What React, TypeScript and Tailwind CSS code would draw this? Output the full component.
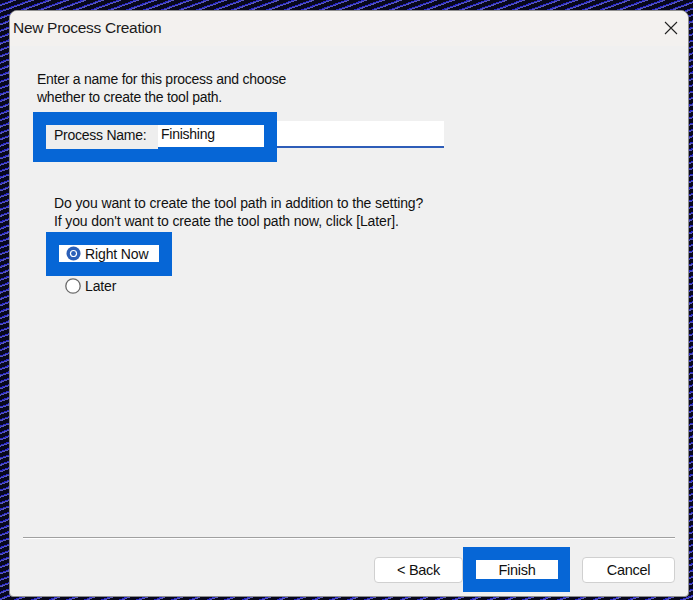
const RadioOn = () => (
  <svg width="15" height="15" viewBox="0 0 15 15" className="shrink-0">
    <circle cx="7.5" cy="7.5" r="7" fill="#2b5fb8" />
    <circle cx="7.5" cy="7.5" r="3.6" fill="#ffffff" />
    <circle cx="7.5" cy="7.5" r="2.4" fill="#2b5fb8" />
  </svg>
);

const RadioOff = () => (
  <svg width="16" height="16" viewBox="0 0 16 16" className="shrink-0">
    <circle cx="8" cy="8" r="7.2" fill="#ffffff" stroke="#6a6a6a" strokeWidth="1.3" />
  </svg>
);

export default function App() {
  return (
    <div
      className="w-[693px] h-[600px] overflow-hidden pt-[10px] pl-[9px] bg-[#08081c] bg-[repeating-linear-gradient(160deg,#08081c_0px,#08081c_4px,#2626c8_4px,#2626c8_5px,#5a5ab8_5px,#5a5ab8_6px)]"
      style={{ fontFamily: '"Liberation Sans", Arial, sans-serif' }}
    >
      <div className="w-[680px] h-[587px] flex flex-col rounded-t-[8px] rounded-b-[4px] border border-[#8e8e8e] bg-[#f0f0f0] overflow-hidden text-[#111]">
        {/* title bar */}
        <div className="h-[35px] shrink-0 flex items-center justify-between bg-[#f3f1ef] pl-[3px] pr-[10px] pb-[2px]">
          <span className="text-[15.5px] tracking-[-0.3px] text-[#1b1b1b]">New Process Creation</span>
          <svg width="14" height="14" viewBox="0 0 14 14">
            <path d="M1 1 L13 13 M13 1 L1 13" stroke="#222" strokeWidth="1.1" />
          </svg>
        </div>

        {/* body */}
        <div className="flex-1 flex flex-col text-[14px] leading-[18px] tracking-[-0.12px]">
          <p className="mt-[24px] ml-[27px] tracking-[-0.25px]">
            Enter a name for this process and choose
            <br />
            whether to create the tool path.
          </p>

          <div className="flex items-start mt-[6px] ml-[23px] tracking-[-0.25px]">
            <div className="w-[244px] h-[50px] bg-[#0666d6] pt-[13px] pl-[13px] flex">
              <div className="w-[112px] h-[24px] bg-[#eeeeee] pl-[8px] pt-[1px]">Process Name:</div>
              <div className="w-[106px] h-[22px] bg-white pl-[3px]">Finishing</div>
            </div>
            <div className="mt-[9px] w-[167px] h-[27px] bg-white border-b-2 border-[#2e5db8]" />
          </div>

          <p className="mt-[32px] ml-[44px]">
            Do you want to create the tool path in addition to the setting?
            <br />
            If you don't want to create the tool path now, click [Later].
          </p>

          <div className="mt-[2px] ml-[36px] w-[126px] h-[44px] bg-[#0666d6] pt-[13px] pl-[13px]">
            <div className="w-[100px] h-[17px] bg-white flex items-center gap-[4px] pl-[7px]">
              <RadioOn />
              <span>Right Now</span>
            </div>
          </div>

          <div className="mt-[1px] ml-[55px] flex items-center gap-[4px]">
            <RadioOff />
            <span>Later</span>
          </div>

          <div className="flex-1" />

          <div className="mx-[13px] h-[2px] border-t border-[#a0a0a0] border-b border-b-white" />

          <div className="flex items-center justify-end mt-[8px] mb-[4px] pr-[13px]">
            <button className="w-[89px] h-[26px] bg-white border border-[#d0d0d0] rounded-[4px] text-[14.5px] tracking-[-0.3px]">
              &lt; Back
            </button>
            <div className="w-[107px] h-[45px] bg-[#0666d6] pt-[13px] pl-[13px]">
              <div className="w-[82px] h-[19px] bg-white flex items-center justify-center text-[14.5px] tracking-[-0.3px]">
                Finish
              </div>
            </div>
            <button className="ml-[12px] w-[93px] h-[26px] bg-white border border-[#d0d0d0] rounded-[4px] text-[14.5px] tracking-[-0.3px]">
              Cancel
            </button>
          </div>
        </div>
      </div>
    </div>
  );
}
